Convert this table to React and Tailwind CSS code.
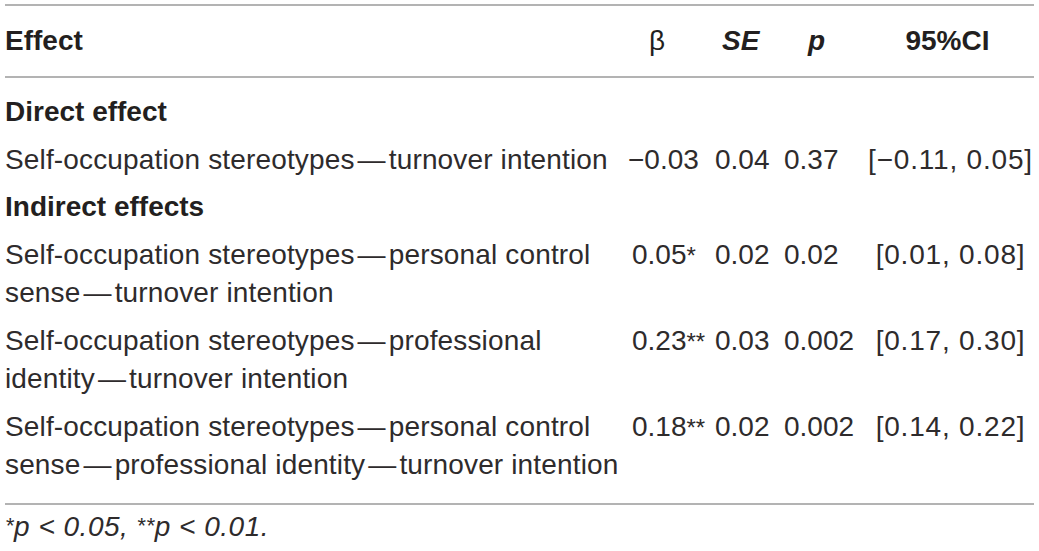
import React from "react";

const D = () => <span className="mx-[3px]">—</span>;
const Star = ({ n }) => (
  <span className="text-[24px] leading-none">{n}</span>
);
const Sup = ({ n }) => (
  <span className="relative -top-[3px] text-[22px] leading-none">{n}</span>
);

const rows = [
  {
    label: (
      <>
        Self-occupation stereotypes<D />personal control
        <br />
        sense<D />turnover intention
      </>
    ),
    b: <>0.05<Star n="*" /></>,
    se: "0.02",
    p: "0.02",
    ci: "[0.01, 0.08]",
  },
  {
    label: (
      <>
        Self-occupation stereotypes<D />professional
        <br />
        identity<D />turnover intention
      </>
    ),
    b: <>0.23<Star n="**" /></>,
    se: "0.03",
    p: "0.002",
    ci: "[0.17, 0.30]",
  },
  {
    label: (
      <>
        Self-occupation stereotypes<D />personal control
        <br />
        sense<D />professional identity<D />turnover intention
      </>
    ),
    b: <>0.18<Star n="**" /></>,
    se: "0.02",
    p: "0.002",
    ci: "[0.14, 0.22]",
  },
];

function Row({ label, b, se, p, ci }) {
  return (
    <div className="grid grid-cols-[617px_88px_69px_82px_173px] py-[4.5px] leading-[38.5px] text-[#2e2b2c]">
      <div className="whitespace-nowrap tracking-[0.15px]">{label}</div>
      <div className="pl-[10px] whitespace-nowrap">{b}</div>
      <div className="pl-[5px] whitespace-nowrap">{se}</div>
      <div className="pl-[5px] whitespace-nowrap">{p}</div>
      <div className="pl-[6px] text-center whitespace-nowrap tracking-[0.8px]">{ci}</div>
    </div>
  );
}

export default function App() {
  return (
    <div className="w-[1039px] h-[551px] bg-white overflow-hidden pl-[5px] pt-[4px] text-[#231f20] text-[28px] font-['Liberation_Sans',Arial,sans-serif]">
      <div className="w-[1029px]">
        <div className="h-[2px] bg-[#b3b3b3]" />
        <div className="grid grid-cols-[617px_88px_69px_82px_173px] py-[15.75px] leading-[38.5px] font-bold">
          <div>Effect</div>
          <div className="pl-[27px] font-normal">β</div>
          <div className="pl-[12px] italic">SE</div>
          <div className="pl-[29px] italic">p</div>
          <div className="text-center">95%CI</div>
        </div>
        <div className="h-[2px] bg-[#b3b3b3]" />
        <div className="pt-[10.5px] pb-[14px]">
          <div className="py-[4.5px] leading-[38.5px] font-bold">Direct effect</div>
          <Row
            label={
              <>
                Self-occupation stereotypes<D />turnover intention
              </>
            }
            b={<span className="-ml-[4px]">−0.03</span>}
            se="0.04"
            p="0.37"
            ci="[−0.11, 0.05]"
          />
          <div className="py-[4.5px] leading-[38.5px] font-bold">Indirect effects</div>
          {rows.map((r, i) => (
            <Row key={i} {...r} />
          ))}
        </div>
        <div className="h-[2px] bg-[#b3b3b3]" />
        <div className="pt-[5px] leading-[34px] italic tracking-[0.5px] text-[#2e2b2c]">
          <Sup n="*" />p &lt; 0.05, <Sup n="**" />p &lt; 0.01.
        </div>
      </div>
    </div>
  );
}
